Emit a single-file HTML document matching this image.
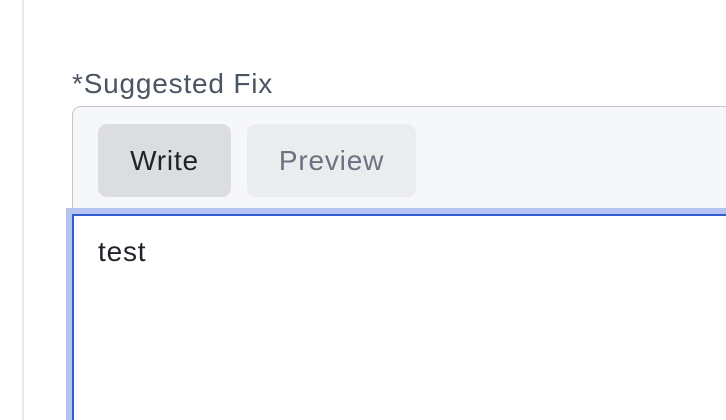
<!DOCTYPE html>
<html><head><style>
html,body{margin:0;width:726px;height:420px;overflow:hidden}
body{background:#fff;position:relative;font-family:"Liberation Sans",sans-serif;letter-spacing:0.8px}
.vl{position:absolute;left:22px;top:0;width:2px;height:420px;background:#e5e7eb}
.lbl{position:absolute;left:72px;top:67px;font-size:28px;color:#4b5563;line-height:34px}
.box{position:absolute;left:72px;top:106px;width:700px;height:300px;border:1px solid #c4c8ce;border-radius:9px;background:#f6f7f9;box-sizing:border-box}
.tab{position:absolute;top:124px;height:73px;border-radius:9px;font-size:28px;line-height:73px;text-align:center}
.w{left:98px;width:133px;background:#dcdde0;color:#1f2227}
.p{left:247px;width:169px;background:#ebecee;color:#6b7280}
.ring{position:absolute;left:66px;top:208px;width:700px;height:212px;border:6px solid #b4c3f0;border-bottom:0;box-sizing:border-box}
.ta{position:absolute;left:72px;top:214px;width:700px;height:206px;border:2px solid #2d5fd1;border-bottom:0;background:#fff;box-sizing:border-box}
.t{position:absolute;left:98px;top:235px;font-size:28px;color:#1f2227;line-height:34px}
</style></head><body>
<div class="vl"></div>
<div class="lbl">*Suggested Fix</div>
<div class="box"></div>
<div class="tab w">Write</div>
<div class="tab p">Preview</div>
<div class="ring"></div>
<div class="ta"></div>
<div class="t">test</div>
</body></html>
